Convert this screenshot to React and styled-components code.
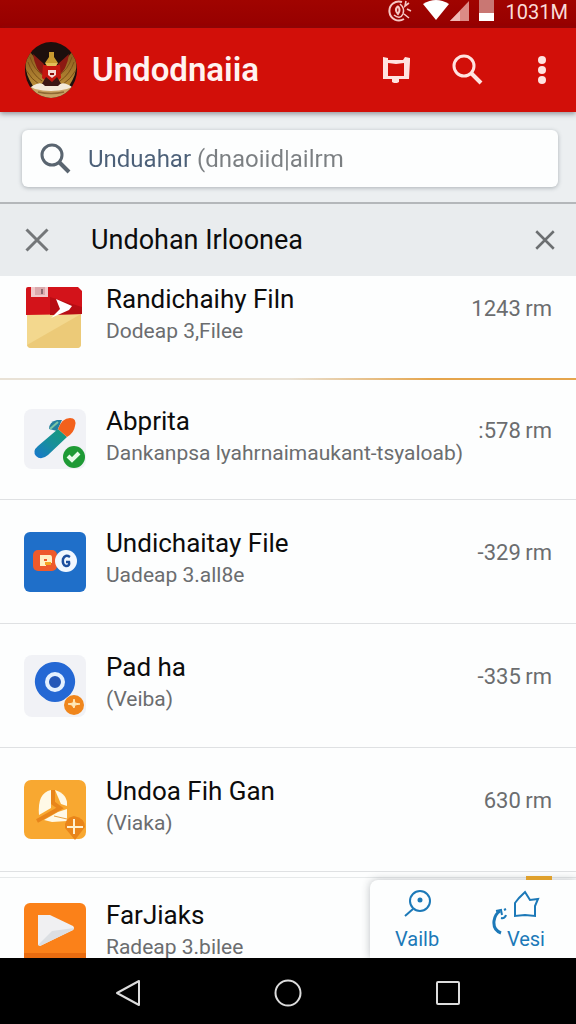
import React from "react";
import styled, { createGlobalStyle, css } from "styled-components";

const GlobalStyle = createGlobalStyle`
  *,
  *::before,
  *::after {
    box-sizing: border-box;
  }
  body {
    margin: 0;
    background: #fdfefe;
    font-family: Roboto, "Liberation Sans", sans-serif;
  }
  button {
    padding: 0;
    border: 0;
    background: none;
    font-family: inherit;
    cursor: pointer;
  }
  svg {
    display: block;
    flex-shrink: 0;
  }
`;

/* ---------- icons ---------- */

const SyncIcon = () => (
  <svg width="27" height="24" viewBox="0 0 27 24" fill="none" stroke="#f6c9c5">
    <path d="M16 2A9.500 9.500 0 1 0 18 19" strokeWidth="2" />
    <path d="M14 4Q19 8 17 14Q14 20 8 15" strokeWidth="1.600" />
    <path d="M12 6Q8 10 12 14Q15 10 12 6" strokeWidth="2" />
    <path d="M20 1l-1 5 4-3M21 9l4 2M18 14l5 4" strokeWidth="1.600" />
  </svg>
);

const WifiIcon = () => (
  <svg width="28" height="24" viewBox="0 0 28 24">
    <path d="M1 4Q14-4 27 4L14 20Z" fill="#fff" />
  </svg>
);

const SignalIcon = () => (
  <svg width="20" height="24" viewBox="0 0 20 24">
    <path d="M0 21L19 1V21Z" fill="#dc8b86" />
    <path d="M0 21L10 11V21Z" fill="#f0b9b5" />
  </svg>
);

const BatteryIcon = () => (
  <svg width="15" height="24" viewBox="0 0 15 24">
    <path d="M0 0H15V14H0Z" fill="#c97773" />
    <path d="M0 13H15V21H0Z" fill="#fff" />
  </svg>
);

const GarudaLogo = () => (
  <svg width="52" height="56" viewBox="0 0 52 56">
    <defs>
      <clipPath id="seal">
        <ellipse cx="26" cy="28" rx="26" ry="28" />
      </clipPath>
      <linearGradient id="wing" x1="0" y1="0" x2="0" y2="1">
        <stop offset="0" stopColor="#8a5a1c" />
        <stop offset="1" stopColor="#b98d38" />
      </linearGradient>
    </defs>
    <g clipPath="url(#seal)">
      <rect width="52" height="56" fill="#1d0f0d" />
      <path d="M5 10L20 28V44H8Q-2 30 1 12Z" fill="url(#wing)" />
      <path d="M47 10L32 28V44H44Q54 30 51 12Z" fill="url(#wing)" />
      <path d="M8 12L19 22V34Q10 28 8 12ZM44 12L33 22V34Q42 28 44 12Z" fill="#8c1a12" />
      <g fill="none" stroke="#7a4f18" strokeWidth="1">
        <path d="M3 20Q7 32 17 39M1 28Q6 37 15 43M5 15Q9 28 19 34" />
        <path d="M49 20Q45 32 35 39M51 28Q46 37 37 43M47 15Q43 28 33 34" />
      </g>
      <path d="M0 45H52V56H0Z" fill="#c9a263" />
      <path d="M18 23H35L36 36L27 43L17 36Z" fill="#c5160f" />
      <path d="M24 10H29V15L33 21H20L24 15Z" fill="#c99a30" />
      <path d="M20 21H33L31 24H22Z" fill="#e2be58" />
      <path d="M23 28H31V33L27 36L23 33Z" fill="#f4d9d4" />
      <path d="M25 31H29V33H25Z" fill="#8b0e0a" />
      <path d="M21 35L15 45H38L32 35L27 40Z" fill="#3b1814" />
      <path d="M6 45Q16 38 20 44H33Q37 38 47 45L42 47Q26 51 10 47Z" fill="#f3ead9" />
      <path d="M13 50Q26 53 39 50" stroke="#8f6a34" strokeWidth="1.500" fill="none" />
    </g>
  </svg>
);

const ScreenIcon = () => (
  <svg width="32" height="32" viewBox="0 0 32 32">
    <path
      d="M3 3L8 4V6H23L25 3L30 4V7L29 25H19V28L17 29H14L12 28V25H3Z M8 9V22H24V9L16 10Z"
      fill="#ffe3e0"
      fillRule="evenodd"
    />
  </svg>
);

const SearchIcon = ({ color }) => (
  <svg width="32" height="32" viewBox="0 0 32 32" fill="none" stroke={color}>
    <circle cx="12" cy="12" r="10" strokeWidth="3" />
    <path d="M19 19L29 29" strokeWidth="4" />
  </svg>
);

const MoreIcon = () => (
  <svg width="32" height="32" viewBox="0 0 32 32" fill="#ffe3e0">
    <circle cx="18" cy="6" r="4" />
    <circle cx="18" cy="16" r="4" />
    <circle cx="18" cy="26" r="4" />
  </svg>
);

const CloseIcon = ({ size, color }) => (
  <svg width={size} height={size} viewBox="0 0 24 24" stroke={color} strokeWidth="3">
    <path d="M1.500 1.500L22.500 22.500M22.500 1.500L1.500 22.500" />
  </svg>
);

const FolderArt = () => (
  <svg width="62" height="62" viewBox="0 0 62 62">
    <path d="M3 24H57V57Q57 61 53 61H7Q3 61 3 57Z" fill="#f3d88e" />
    <path d="M57 27V57Q57 61 53 61H7Q4 61 3 58Z" fill="#ecca78" />
    <path d="M2 2Q2 0 4 0H54L58 4V27L2 28Z" fill="#d3131a" />
    <path d="M26 10L58 20V27L26 28Z" fill="#b80d14" />
    <path d="M7 0H24V10H7Z" fill="#f1c9ca" />
    <path d="M11 0H21V8H11Z" fill="#dba9ac" />
    <path d="M18 2V7" stroke="#8d6a70" strokeWidth="2" />
    <path d="M32 12L48 19L45 23L27 31L36 22Z" fill="#fff" />
  </svg>
);

const BrushArt = () => (
  <svg width="62" height="62" viewBox="0 0 62 62">
    <defs>
      <linearGradient id="brush" x1="1" y1="0" x2="0" y2="1">
        <stop offset="0" stopColor="#169b76" />
        <stop offset="0.500" stopColor="#178f9c" />
        <stop offset="1" stopColor="#1876cf" />
      </linearGradient>
    </defs>
    <rect width="62" height="60" rx="8" fill="#f1f2f6" />
    <path d="M33 22L25 20Q25 13 33 11H38Z" fill="#257f9f" />
    <path d="M26 20L34 13" stroke="#7cc6a4" strokeWidth="2" />
    <path d="M34 20L43 28L24 46Q17 52 12 47Q8 42 14 37Z" fill="url(#brush)" />
    <path d="M34 20Q38 9 46 9Q53 9 51 17Q50 24 43 28Z" fill="#f3611c" />
    <circle cx="50" cy="48" r="11" fill="#1e9a35" />
    <path d="M44 47L48 51L55 44" stroke="#e6fbe8" strokeWidth="4" fill="none" />
  </svg>
);

const BadgesArt = () => (
  <svg width="62" height="62" viewBox="0 0 62 62">
    <rect y="1" width="62" height="60" rx="6" fill="#1f6fc9" />
    <rect x="9" y="19" width="24" height="21" rx="5" fill="#ee5a2c" />
    <path
      d="M16 24H26Q28 24 28 27V32H22V35H16Z M20 28V30H23V28Z"
      fill="#fff1c4"
      fillRule="evenodd"
    />
    <path d="M21 31H27V34H21Z" fill="#f5a623" />
    <circle cx="42" cy="30" r="11" fill="#f2f8ff" />
    <path d="M46 26Q41 23 39 28Q38 34 42 35Q46 35 45 31H42" stroke="#1d4f9e" strokeWidth="2.500" fill="none" />
  </svg>
);

const TargetArt = () => (
  <svg width="62" height="62" viewBox="0 0 62 62">
    <rect width="62" height="62" rx="8" fill="#f1f2f6" />
    <path d="M31 7A19.500 19.500 0 0 1 42 43Q38 47 31 47Q24 47 20 43A19.500 19.500 0 0 1 31 7Z" fill="#2468d4" />
    <circle cx="31" cy="27" r="8" fill="#2458b8" stroke="#e4f1ff" strokeWidth="4" />
    <circle cx="50" cy="50" r="10" fill="#f0861c" />
    <path d="M50 44L51 48L56 49L51 50L50 53L48 50L44 49L49 48Z" fill="#ffe9b8" stroke="#ffe9b8" />
  </svg>
);

const FanArt = () => (
  <svg width="62" height="62" viewBox="0 0 62 62">
    <rect y="1" width="62" height="59" rx="7" fill="#f8a831" />
    <path d="M15 36Q13 14 27 11V29Z" fill="#fff9e6" />
    <path d="M31 11Q44 15 43 27L37 25Z" fill="#fff9e6" />
    <path d="M43 30V42L28 43L20 41L34 33Z" fill="#fff9e6" />
    <path d="M29 11L29 24L36 29L13 42" stroke="#e8851b" strokeWidth="4" fill="none" />
    <path d="M30 37L43 40" stroke="#e8a040" strokeWidth="1" />
    <path d="M50 37Q61 39 61 48L51 61L41 49Q40 39 50 37Z" fill="#e9851a" />
    <path d="M50 40V55M43 48H59" stroke="#fff1cf" strokeWidth="2" />
  </svg>
);

const PlayArt = () => (
  <svg width="62" height="62" viewBox="0 0 62 62">
    <rect width="62" height="62" rx="6" fill="#fb8119" />
    <path d="M0 50H62V62H0Z" fill="#e96c10" />
    <path d="M14 12H26L49 23Q51 25 49 27L16 43L14 42Z" fill="#f0f0f2" />
    <path d="M28 28L50 25L49 27L16 43L14 42Z" fill="#dcdfe3" />
  </svg>
);

const PinIcon = () => (
  <svg width="28" height="28" viewBox="0 0 28 28" fill="none" stroke="#1c79b8" strokeWidth="2">
    <circle cx="17" cy="11" r="10" />
    <path d="M10 19L2 26" />
    <circle cx="17" cy="10" r="1.500" fill="#1c79b8" />
  </svg>
);

const StarIcon = () => (
  <svg width="28" height="28" viewBox="0 0 28 28" fill="none" stroke="#1c79b8" strokeWidth="2">
    <path d="M13 2L18 10L26 9L23 16V26L13 25L3 26V13L7 8Z" />
  </svg>
);

const CurlIcon = () => (
  <svg width="15" height="28" viewBox="0 0 15 28" fill="none" stroke="#1c79b8" strokeWidth="2">
    <path d="M9 26Q1 23 2 14Q3 7 8 4" strokeWidth="3" />
    <path d="M4 4L9 3L10 8M9 11Q13 12 14 8M12 3L14 2" />
  </svg>
);

/* ---------- layout ---------- */

const Page = styled.div`
  display: flex;
  flex-direction: column;
  height: 100vh;
  overflow: hidden;
`;

const StatusBar = styled.div`
  display: flex;
  flex-shrink: 0;
  align-items: flex-start;
  justify-content: flex-end;
  height: 28px;
  padding-right: 8px;
  background: linear-gradient(#a00400, #960000);
  color: #fbdcd9;
`;

const StatusGroup = styled.div`
  display: flex;
  margin-right: ${(props) => props.$gap}px;
`;

const Clock = styled.span`
  font-size: 20px;
  line-height: 24px;
`;

const AppBar = styled.header`
  display: flex;
  z-index: 1;
  flex-shrink: 0;
  align-items: center;
  height: 84px;
  padding-left: 25px;
  background: #d20f09;
  box-shadow: 0 2px 5px rgba(60, 60, 70, 0.5);
`;

const AppTitle = styled.h1`
  flex: 1;
  margin: 0 0 0 15px;
  color: #fff3f1;
  font-size: 33px;
  font-weight: 600;
  line-height: 40px;
`;

const BarButton = styled.button`
  display: flex;
  align-items: center;
  justify-content: center;
  width: 72px;
  height: 56px;
`;

const SearchArea = styled.div`
  flex-shrink: 0;
  padding: 18px 18px 15px 22px;
  border-bottom: 2px solid #b4b7ba;
  background: #eceff1;
`;

const SearchBox = styled.label`
  display: flex;
  align-items: center;
  gap: 16px;
  height: 57px;
  padding: 0 18px;
  border-radius: 6px;
  background: #fdfefe;
  box-shadow: 0 1px 4px rgba(50, 60, 70, 0.35);
`;

const SearchInput = styled.input`
  flex: 1;
  min-width: 0;
  height: 40px;
  padding: 0;
  border: 0;
  outline: 0;
  background: none;
  color: #4c6078;
  font-family: inherit;
  font-size: 24px;
  &::placeholder {
    background: linear-gradient(90deg, #4c6078 104px, #7b7f82 104px);
    background-clip: text;
    color: transparent;
    opacity: 1;
  }
`;

const SectionBar = styled.div`
  display: flex;
  flex-shrink: 0;
  align-items: center;
  height: 72px;
  padding: 0 21px 0 25px;
  background: #e9ecee;
`;

const SectionTitle = styled.h2`
  flex: 1;
  margin: 0 0 0 42px;
  color: #0c0c0c;
  font-size: 27px;
  font-weight: 400;
  line-height: 32px;
`;

const PlainButton = styled.button`
  display: flex;
`;

const Main = styled.main`
  position: relative;
  flex: 1;
  min-height: 0;
  overflow: hidden;
`;

const FileList = styled.ul`
  margin: 0;
  padding: 0;
  list-style: none;
`;

const edges = {
  first: css`
    align-items: flex-start;
    height: 104px;
    padding-top: 11px;
    border-image: linear-gradient(90deg, #e9e2d6 50%, #e5a54c 75%) 1;
    border-bottom-width: 2px;
  `,
  short: css`
    height: 120px;
  `,
  last: css`
    align-items: flex-start;
    margin-top: 5px;
    padding-top: 25px;
    border-top: 1px solid #e6e9ea;
    border-bottom: 0;
  `,
};

const FileRow = styled.li`
  display: flex;
  align-items: center;
  height: 124px;
  padding: 0 24px;
  border-bottom: 1px solid #dfe1e3;
  ${(props) => edges[props.$edge]}
`;

const FileBody = styled.div`
  display: flex;
  flex: 1;
  align-items: flex-start;
  min-width: 0;
  height: 62px;
  gap: 20px;
`;

const FileText = styled.div`
  flex: 1;
  min-width: 0;
  white-space: nowrap;
`;

const FileName = styled.div`
  color: #0c0c0c;
  font-size: 26px;
  line-height: 24px;
`;

const FileNote = styled.div`
  margin-top: 8px;
  color: #6b6d6f;
  font-size: 21px;
  line-height: 24px;
`;

const FileSize = styled.span`
  padding-top: 8px;
  color: #6b6d6f;
  font-size: 22px;
  line-height: 28px;
`;

const TabCard = styled.nav`
  position: absolute;
  right: 0;
  bottom: 0;
  display: flex;
  align-items: flex-start;
  justify-content: space-between;
  width: 206px;
  height: 78px;
  padding: 10px 31px 0 25px;
  border-top-left-radius: 8px;
  background: #fdfefe;
  box-shadow: 0 0 8px rgba(40, 50, 60, 0.3);
  &::before {
    content: "";
    position: absolute;
    top: -4px;
    right: 24px;
    width: 26px;
    height: 4px;
    background: #dfa02c;
  }
`;

const Tab = styled.button`
  display: flex;
  align-items: center;
  color: #1c79b8;
`;

const TabStack = styled.span`
  display: flex;
  flex-direction: column;
  align-items: center;
  font-size: 20px;
  line-height: 24px;
  gap: 9px;
`;

const SystemNav = styled.footer`
  display: flex;
  flex-shrink: 0;
  align-items: center;
  justify-content: center;
  height: 66px;
  padding-top: 4px;
  background: #000;
  gap: 128px;
`;

const files = [
  { name: "Randichaihy Filn", note: "Dodeap 3,Filee", size: "1243\u2009rm", art: FolderArt, edge: "first" },
  { name: "Abprita", note: "Dankanpsa lyahrnaimaukant-tsyaloab)", size: ":578\u2009rm", art: BrushArt, edge: "short" },
  { name: "Undichaitay File", note: "Uadeap 3.all8e", size: "-329\u2009rm", art: BadgesArt },
  { name: "Pad ha", note: "(Veiba)", size: "-335\u2009rm", art: TargetArt },
  { name: "Undoa Fih Gan", note: "(Viaka)", size: "630\u2009rm", art: FanArt },
  { name: "FarJiaks", note: "Radeap 3.bilee", art: PlayArt, edge: "last" },
];

export default function App() {
  return (
    <Page>
      <GlobalStyle />
      <StatusBar>
        <StatusGroup $gap={9}>
          <SyncIcon />
        </StatusGroup>
        <StatusGroup $gap={9}>
          <WifiIcon />
          <SignalIcon />
        </StatusGroup>
        <StatusGroup $gap={12}>
          <BatteryIcon />
        </StatusGroup>
        <Clock>1031M</Clock>
      </StatusBar>
      <AppBar>
        <GarudaLogo />
        <AppTitle>Undodnaiia</AppTitle>
        <BarButton aria-label="Screen">
          <ScreenIcon />
        </BarButton>
        <BarButton aria-label="Search">
          <SearchIcon color="#ffe3e0" />
        </BarButton>
        <BarButton aria-label="More">
          <MoreIcon />
        </BarButton>
      </AppBar>
      <SearchArea>
        <SearchBox>
          <SearchIcon color="#5a6570" />
          <SearchInput type="text" aria-label="Search files" placeholder="Unduahar (dnaoiid|ailrm" />
        </SearchBox>
      </SearchArea>
      <SectionBar>
        <PlainButton aria-label="Close">
          <CloseIcon size={24} color="#747779" />
        </PlainButton>
        <SectionTitle>Undohan Irloonea</SectionTitle>
        <PlainButton aria-label="Clear">
          <CloseIcon size={20} color="#6c6f71" />
        </PlainButton>
      </SectionBar>
      <Main>
        <FileList>
          {files.map(({ name, note, size, art: Art, edge }) => (
            <FileRow key={name} $edge={edge}>
              <FileBody>
                <Art />
                <FileText>
                  <FileName>{name}</FileName>
                  <FileNote>{note}</FileNote>
                </FileText>
                {size && <FileSize>{size}</FileSize>}
              </FileBody>
            </FileRow>
          ))}
        </FileList>
        <TabCard>
          <Tab>
            <TabStack>
              <PinIcon />
              Vailb
            </TabStack>
          </Tab>
          <Tab>
            <CurlIcon />
            <TabStack>
              <StarIcon />
              Vesi
            </TabStack>
          </Tab>
        </TabCard>
      </Main>
      <SystemNav>
        <PlainButton aria-label="Back">
          <svg width="32" height="32" viewBox="0 0 32 32" fill="none" stroke="#dcdcdc" strokeWidth="2">
            <path d="M27 4V28L5 16Z" strokeLinejoin="round" />
          </svg>
        </PlainButton>
        <PlainButton aria-label="Home">
          <svg width="32" height="32" viewBox="0 0 32 32" fill="none" stroke="#dcdcdc" strokeWidth="2">
            <circle cx="16" cy="16" r="12.500" />
          </svg>
        </PlainButton>
        <PlainButton aria-label="Recent apps">
          <svg width="32" height="32" viewBox="0 0 32 32" fill="none" stroke="#dcdcdc" strokeWidth="2">
            <rect x="5" y="5" width="22" height="22" rx="1" />
          </svg>
        </PlainButton>
      </SystemNav>
    </Page>
  );
}
